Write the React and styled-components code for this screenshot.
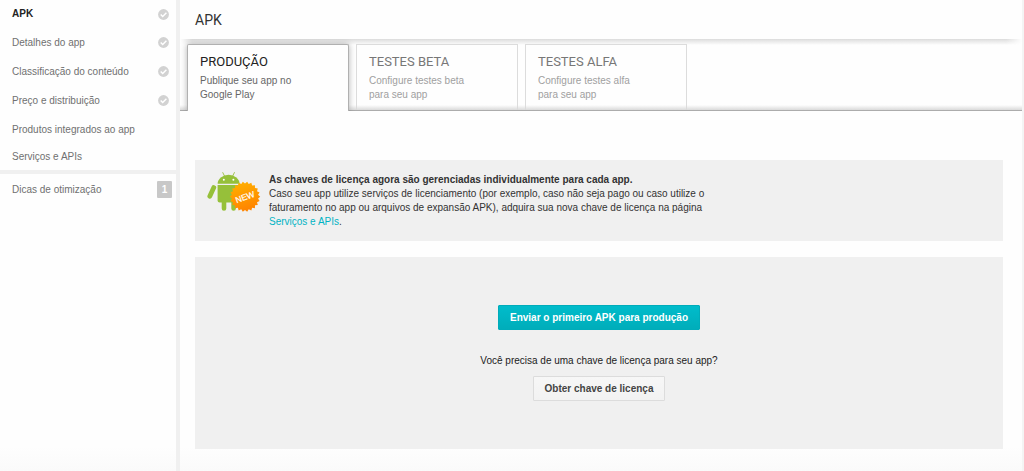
import { useState } from "react";
import styled, { createGlobalStyle, css } from "styled-components";

const GlobalStyle = createGlobalStyle`
  *, *::before, *::after {
    box-sizing: border-box;
  }

  body {
    margin: 0;
    background: #fefefe;
    color: #333;
    font: 10px/14px "Liberation Sans", Arial, sans-serif;
  }

  p, h1, h2 {
    margin: 0;
  }
`;

// Page layout
const Page = styled.div`
  display: flex;
  min-height: 100vh;
  border-right: 2px solid #f4f4f4;
  background: linear-gradient(to top, #fafafa, #fefefe 24px);
`;

const Sidebar = styled.aside`
  flex: 0 0 180px;
  border-right: 4px solid #f0f0f0;
`;

const Main = styled.main`
  flex: 1;
  min-width: 0;
`;

// Sidebar
const NavList = styled.ul`
  margin: 0;
  padding: 0;
  list-style: none;
`;

const NavLink = styled.a`
  display: flex;
  align-items: center;
  justify-content: space-between;
  height: 29px;
  padding: 0 7px 0 12px;
  color: ${({ $active }) => ($active ? "#222" : "#707070")};
  font-weight: ${({ $active }) => ($active ? "bold" : "normal")};
  text-decoration: none;
`;

const PrimaryNav = styled(NavList)`
  li:first-child ${NavLink} {
    height: 28px;
  }

  li:last-child ${NavLink} {
    height: 26px;
  }
`;

const SecondaryNav = styled(NavList)`
  border-top: 4px solid #f0f0f0;

  ${NavLink} {
    height: 31px;
    padding-right: 4px;
  }
`;

const Count = styled.span`
  width: 15px;
  border-radius: 1px;
  background: #c8c8c8;
  color: #fff;
  font-weight: bold;
  line-height: 17px;
  text-align: center;
`;

// Header and tabs
const Header = styled.header`
  display: flex;
  align-items: center;
  height: 39px;
  padding-left: 15px;
`;

const Title = styled.h1`
  color: #333;
  font: 14px/20px Roboto, sans-serif;
`;

const TabBar = styled.div`
  position: relative;
  display: flex;
  gap: 7px;
  padding: 5px 7px 0;
  overflow: hidden;

  &::before,
  &::after {
    content: "";
    position: absolute;
    right: 0;
    left: 0;
    height: 6px;
  }

  &::before {
    top: 0;
    background: linear-gradient(#dcdcdc, rgba(240, 240, 240, 0));
    mask-image: linear-gradient(
      to right,
      transparent,
      #000 12px,
      #000 calc(100% - 16px),
      transparent
    );
  }

  &::after {
    bottom: 0;
    border-bottom: 1px solid #acacac;
    background: linear-gradient(rgba(220, 220, 220, 0), #dadada);
  }
`;

const Tab = styled.button`
  position: relative;
  width: 162px;
  padding: 8px 12px 9px;
  border: 1px solid #dcdcdc;
  border-bottom: 0;
  background: #fefefe;
  color: #a0a0a0;
  font: inherit;
  text-align: left;

  ${({ $active }) =>
    $active &&
    css`
      z-index: 1;
      border-color: #b0b0b0;
      border-radius: 2px 2px 0 0;
      box-shadow: 0 0 6px rgba(0, 0, 0, 0.3);
      color: #666;
    `}
`;

const TabName = styled.span`
  display: block;
  margin-bottom: 4px;
  color: ${({ $active }) => ($active ? "#222" : "#777")};
  font: 13px/17px Roboto, sans-serif;
`;

const TabHint = styled.span`
  display: block;
  max-width: 104px;
`;

// Content
const Content = styled.div`
  display: flex;
  flex-direction: column;
  gap: 16px;
  padding: 49px 19px 22px 15px;
`;

const Notice = styled.section`
  display: flex;
  gap: 8px;
  padding: 12px;
  background: #f0f0f0;
`;

const NoticeText = styled.p`
  max-width: 450px;
  padding-top: 1px;
  color: #333;
`;

const NoticeTitle = styled.strong`
  display: block;
`;

const TextLink = styled.a`
  color: #00b3c4;
  text-decoration: none;
`;

const UploadPanel = styled.section`
  display: flex;
  flex-direction: column;
  align-items: center;
  padding: 48px 16px;
  background: #f0f0f0;
`;

const Question = styled.p`
  margin: 24px 0 8px;
  color: #222;
`;

const Button = styled.button`
  height: 25px;
  padding: 0 11px;
  border: 1px solid #dcdcdc;
  border-radius: 1px;
  background: linear-gradient(#f7f7f7, #f2f2f2);
  color: #444;
  font: inherit;
  font-weight: bold;
`;

const PrimaryButton = styled(Button)`
  border-color: #00acba;
  background: linear-gradient(#00bccb, #00adba);
  color: #fff;
`;

const navItems = [
  { label: "APK", done: true },
  { label: "Detalhes do app", done: true },
  { label: "Classificação do conteúdo", done: true },
  { label: "Preço e distribuição", done: true },
  { label: "Produtos integrados ao app" },
  { label: "Serviços e APIs" },
];

const tabs = [
  { name: "PRODUÇÃO", hint: "Publique seu app no Google Play" },
  { name: "TESTES BETA", hint: "Configure testes beta para seu app" },
  { name: "TESTES ALFA", hint: "Configure testes alfa para seu app" },
];

// Zigzag outline of the "new" seal
const sealPoints = Array.from({ length: 44 }, (_, i) => {
  const r = i % 2 ? 13.2 : 15.2;
  const a = (i * Math.PI) / 22;
  return `${(38 + r * Math.cos(a)).toFixed(2)},${(24.7 + r * Math.sin(a)).toFixed(2)}`;
}).join(" ");

function CheckIcon() {
  return (
    <svg width="11" height="11" viewBox="0 0 11 11" aria-hidden="true">
      <circle cx="5.5" cy="5.5" r="5.4" fill="#d2d2d2" />
      <path
        d="M2.7 5.6l2 2 3.7-3.9"
        fill="none"
        stroke="#fff"
        strokeWidth="1.4"
      />
    </svg>
  );
}

function AndroidNewIcon() {
  return (
    <svg width="54" height="42" viewBox="0 0 54 42" aria-hidden="true">
      <defs>
        <linearGradient id="seal" x1="0" y1="0" x2="0.3" y2="1">
          <stop offset="0" stopColor="#ffb400" />
          <stop offset="1" stopColor="#ff8500" />
        </linearGradient>
      </defs>
      <g fill="#96c03a" stroke="#96c03a" strokeLinecap="round">
        <path d="M15.8 0.6l2 4M27.4 0.6l-2 4" strokeWidth="0.9" fill="none" />
        <path d="M10.6 11.8a11 9 0 0 1 22 0z" stroke="none" />
        <path
          d="M10.6 13h22v15.5a2 2 0 0 1-2 2H12.6a2 2 0 0 1-2-2z"
          stroke="none"
        />
        <path d="M6.8 15.6L2.8 24.2" strokeWidth="4.8" />
        <path d="M17 29v7.4M26.6 29v7.4" strokeWidth="4.6" />
      </g>
      <circle cx="16.8" cy="7.8" r="1" fill="#fff" />
      <circle cx="26.4" cy="7.8" r="1" fill="#fff" />
      <polygon points={sealPoints} fill="url(#seal)" />
      <text
        x="38"
        y="28"
        fill="#fff"
        fontFamily="Liberation Sans, Arial, sans-serif"
        fontSize="8.5"
        textAnchor="middle"
        transform="rotate(-20 38 25)"
        stroke="#fff"
        strokeWidth="0.2"
      >
        NEW
      </text>
    </svg>
  );
}

function App() {
  const [activeTab, setActiveTab] = useState(0);

  return (
    <>
      <GlobalStyle />
      <Page>
        <Sidebar>
          <nav>
            <PrimaryNav>
              {navItems.map((item, i) => (
                <li key={item.label}>
                  <NavLink href="#" $active={i === 0}>
                    {item.label}
                    {item.done && <CheckIcon />}
                  </NavLink>
                </li>
              ))}
            </PrimaryNav>
            <SecondaryNav>
              <li>
                <NavLink href="#">
                  Dicas de otimização
                  <Count>1</Count>
                </NavLink>
              </li>
            </SecondaryNav>
          </nav>
        </Sidebar>

        <Main>
          <Header>
            <Title>APK</Title>
          </Header>
          <TabBar role="tablist">
            {tabs.map((tab, i) => (
              <Tab
                key={tab.name}
                type="button"
                role="tab"
                aria-selected={i === activeTab}
                $active={i === activeTab}
                onClick={() => setActiveTab(i)}
              >
                <TabName $active={i === activeTab}>{tab.name}</TabName>
                <TabHint>{tab.hint}</TabHint>
              </Tab>
            ))}
          </TabBar>

          <Content>
            <Notice>
              <AndroidNewIcon />
              <NoticeText>
                <NoticeTitle>
                  As chaves de licença agora são gerenciadas individualmente
                  para cada app.
                </NoticeTitle>
                Caso seu app utilize serviços de licenciamento (por exemplo,
                caso não seja pago ou caso utilize o
                <br />
                faturamento no app ou arquivos de expansão APK), adquira sua
                nova chave de licença na página
                <br />
                <TextLink href="#">Serviços e APIs</TextLink>.
              </NoticeText>
            </Notice>

            <UploadPanel>
              <PrimaryButton type="button">
                Enviar o primeiro APK para produção
              </PrimaryButton>
              <Question>
                Você precisa de uma chave de licença para seu app?
              </Question>
              <Button type="button">Obter chave de licença</Button>
            </UploadPanel>
          </Content>
        </Main>
      </Page>
    </>
  );
}

export default App;
